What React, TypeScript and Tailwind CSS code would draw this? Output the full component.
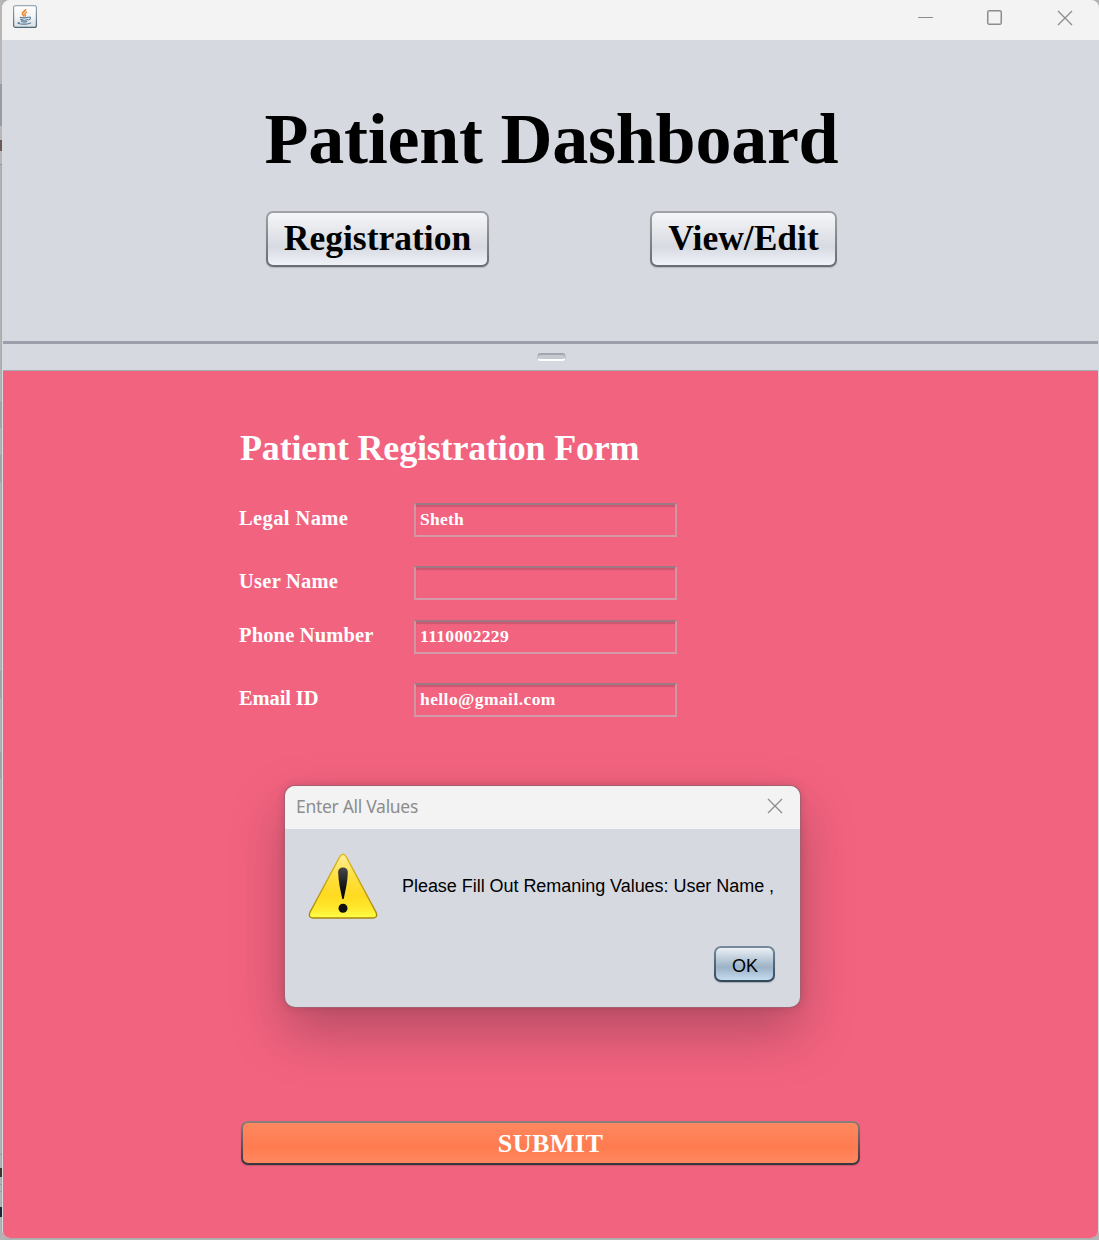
import React from "react";

const serif = "font-['Liberation_Serif','Times_New_Roman',serif] font-bold";

function JavaIcon() {
  return (
    <svg width="24" height="24" viewBox="0 0 24 24" fill="none">
      <defs>
        <linearGradient id="javaBg" x1="0" y1="0" x2="0" y2="1">
          <stop offset="0" stopColor="#fff" />
          <stop offset="0.5" stopColor="#f4f5f6" />
          <stop offset="1" stopColor="#d8dde0" />
        </linearGradient>
        <linearGradient id="javaEdge" x1="0" y1="0" x2="0" y2="1">
          <stop offset="0" stopColor="#9aa9b5" />
          <stop offset="1" stopColor="#4d6878" />
        </linearGradient>
      </defs>
      <rect x="0.6" y="0.6" width="22.8" height="21.8" rx="2" fill="url(#javaBg)" stroke="url(#javaEdge)" strokeWidth="1.2" />
      <path d="M12.600 4c.8 2-3.800 3-3.200 4.800.3 1 1.400 1.600 1.800 2.700" stroke="#f0872a" strokeWidth="1.700" />
      <path d="M14.200 7c-2.400 1-3 1.800-1.900 3 .4.500.2 1.200-.2 1.700" stroke="#f0872a" strokeWidth="1.300" />
      <path d="M6.800 12.300c1.500.7 6.800.7 8.800 0M7.300 14.400c2 .9 6 .8 7.800.1M8 16.300c1.700.8 4.700.7 6.200.1" stroke="#587b98" strokeWidth="1.200" />
      <path d="M15.500 12.300c2.800-.9 2.700 2-.2 2.800" stroke="#587b98" strokeWidth="1.100" />
      <path d="M6.600 17.300c-4.300.8.500 2 5 1.800 3.800-.1 6.500-.9 5.900-1.600" stroke="#587b98" strokeWidth="1.100" />
    </svg>
  );
}

function CloseIcon() {
  return (
    <svg width="16" height="16" viewBox="0 0 16 16" fill="none">
      <path d="M1 1l14 14M15 1L1 15" stroke="#8c8c8c" strokeWidth="1.300" />
    </svg>
  );
}

function WarningIcon() {
  return (
    <svg width="72" height="70" viewBox="0 0 72 70">
      <defs>
        <linearGradient id="warnFill" x1="0" y1="0" x2="0" y2="1">
          <stop offset="0" stopColor="#ffee98" />
          <stop offset="0.350" stopColor="#ffe040" />
          <stop offset="0.650" stopColor="#ffda20" />
          <stop offset="0.850" stopColor="#ffe92e" />
          <stop offset="1" stopColor="#ffff48" />
        </linearGradient>
        <linearGradient id="warnEdge" x1="0" y1="0" x2="0" y2="1">
          <stop offset="0" stopColor="#deba20" />
          <stop offset="1" stopColor="#a5860c" />
        </linearGradient>
        <linearGradient id="warnMark" x1="0" y1="0" x2="0" y2="1">
          <stop offset="0" stopColor="#484848" />
          <stop offset="0.600" stopColor="#161616" />
          <stop offset="1" stopColor="#000" />
        </linearGradient>
      </defs>
      <path
        d="M32.800 4.700Q36 -0.100 39.200 4.700L69 60.200Q71.200 66 66 66H6Q.8 66 3 60.200Z"
        fill="url(#warnFill)"
        stroke="url(#warnEdge)"
        strokeWidth="1.400"
      />
      <path d="M36 15.500c3.500 0 5 2.200 4.800 5.700-.3 9-2.300 17-4 25.300q-.8 1.500-1.600 0c-1.700-8.300-3.700-16.300-4-25.300-.2-3.500 1.300-5.700 4.800-5.700Z" fill="url(#warnMark)" />
      <circle cx="36" cy="56.200" r="4.500" fill="#111" />
    </svg>
  );
}

function NavButton({ label, size }: { label: string; size: string }) {
  return (
    <button className={`${size} h-[56px] rounded-[7px] bg-linear-to-b from-[#a0a2a8] to-[#6a6c72] p-[2px] shadow-[0_1px_1px_#b4b6bb]`}>
      <span className={`${serif} flex h-full items-center justify-center rounded-[5px] bg-linear-to-b from-[#f5f6f8] via-[#d7dae1] via-65% to-[#f0f2f8] pb-px pl-px text-[35.500px] leading-none text-black`}>
        {label}
      </span>
    </button>
  );
}

function Field({ label, value, gap, labelTrack = "", valueTrack = "" }: { label: string; value: string; gap: string; labelTrack?: string; valueTrack?: string }) {
  return (
    <div className={`flex h-[34px] ${gap}`}>
      <label className={`${serif} ${labelTrack} w-[175px] text-[20.500px] leading-[31px] text-white`}>{label}</label>
      <div className={`${serif} ${valueTrack} w-[263px] border-2 border-t-[#a07784] border-x-[#d295a4] border-b-[#d39aa9] pl-[4px] text-[17.500px] leading-[29px] text-white shadow-[inset_0_2px_1px_#cb5770]`}>
        {value}
      </div>
    </div>
  );
}

export default function App() {
  return (
    <div className="relative flex h-[1240px] w-[1099px] overflow-hidden bg-[#b3b3b3]">
      <div className="relative z-10 flex h-[1230px] w-[2px] shrink-0 flex-col overflow-hidden">
        <div className="h-[85px] border-b border-[#999] bg-[#b8b6b6]" />
        <div className="h-[41px] bg-[#989aa5]" />
        <div className="h-[39px] border-b border-[#999] bg-[#b8b6b6] pt-[14px]">
          <div className="h-[11px] bg-[#6b5a54]" />
        </div>
        <div className="mt-[236px] h-[27px] bg-[#a4a4a4]" />
        <div className="mt-[27px] h-[27px] bg-[#a4a4a4]" />
        <div className="mt-[189px] h-[27px] bg-[#a4a4a4]" />
        <div className="mt-[54px] h-[27px] bg-[#a4a4a4]" />
        <div className="mt-[375px] h-[14px] border-t border-[#999]" />
        <div className="h-[9px] bg-[#44352b]" />
        <div className="mt-[7px] h-[8px] border-y border-[#999]" />
        <div className="mt-[15px] h-[10px] bg-[#242430]" />
      </div>

      <div className="flex h-[1238px] flex-1 flex-col overflow-hidden rounded-lg bg-[#d6d9e0] shadow-[0_0_0_1px_#aaa]">
        <header className="flex h-[40px] shrink-0 items-center justify-between bg-[#f3f3f3] pr-[26px] pl-[11px]">
          <div className="-mt-[7px]">
            <JavaIcon />
          </div>
          <div className="-mt-[5px] flex items-center">
            <div className="h-px w-[15px] bg-[#8c8c8c]" />
            <div className="ml-[54px] size-[15px] rounded-[2px] border border-[#8c8c8c] shadow-[inset_0_0_0_0.500px_#8c8c8c]" />
            <div className="ml-[55px]">
              <CloseIcon />
            </div>
          </div>
        </header>

        <section className="flex h-[301px] shrink-0 flex-col items-center">
          <h1 className={`${serif} mt-[63px] ml-[2px] h-[71px] whitespace-nowrap text-[72px] leading-[72px] tracking-[-0.250px] text-black`}>Patient Dashboard</h1>
          <div className="mt-[37px] ml-px flex w-[571px] justify-between">
            <NavButton label="Registration" size="w-[223px]" />
            <NavButton label="View/Edit" size="w-[187px]" />
          </div>
        </section>

        <div className="mx-px flex h-[30px] shrink-0 justify-center border-t-[3px] border-b border-t-[#9a9fa9] border-b-[#a5a9b3]">
          <div className="mt-[9px] ml-[2px] h-[8px] w-[29px] rounded-[4px] border border-t-2 border-b-2 border-t-[#a3a6ad] border-x-[#c0c3ca] border-b-white bg-[#c6c9d0]" />
        </div>

        <main className="mr-px ml-px flex flex-1 flex-col overflow-hidden rounded-b-[7px] bg-[#f2637f] pl-[236px]">
          <h2 className={`${serif} mt-[59px] ml-px h-[36px] text-[36px] leading-[36px] tracking-[-0.180px] whitespace-nowrap text-white`}>Patient Registration Form</h2>
          <Field label="Legal Name" value="Sheth" gap="mt-[37px]" labelTrack="tracking-[0.400px]" valueTrack="tracking-[0.250px]" />
          <Field label="User Name" value="" gap="mt-[29px]" labelTrack="tracking-[0.250px]" />
          <Field label="Phone Number" value="1110002229" gap="mt-[20px]" labelTrack="tracking-[0.150px]" valueTrack="tracking-[0.350px]" />
          <Field label="Email ID" value="hello@gmail.com" gap="mt-[29px]" labelTrack="tracking-[-0.120px]" valueTrack="tracking-[0.420px]" />
          <button className="mt-[404px] ml-[2px] h-[44px] w-[619px] rounded-[7px] bg-linear-to-b from-[#8c7e7c] to-[#38353c] p-[2px] shadow-[0_1px_1px_#c45670]">
            <span className={`${serif} flex h-full items-center justify-center rounded-[5px] bg-linear-to-b from-[#ff8860] via-[#ff7b50] via-60% to-[#ff8760] pt-[2px] text-[26px] leading-none tracking-[0.500px] text-white`}>
              SUBMIT
            </span>
          </button>
        </main>
      </div>

      <div className="absolute top-[786px] left-[285px] flex h-[221px] w-[515px] flex-col rounded-[10px] bg-[#d6d9e0] shadow-[0_0_0_1px_#a65f70,0_0_9px_#50283440,0_24px_52px_#40203058]">
        <div className="flex h-[43px] shrink-0 items-center justify-between rounded-t-[10px] bg-[#f3f3f3] pr-[17px] pl-[11px]">
          <span className="-mt-[2px] font-['Noto_Sans','Open_Sans',sans-serif] text-[17.500px] leading-none tracking-[-0.300px] text-[#8d8d8d]">Enter All Values</span>
          <div className="-mt-[3px]">
            <CloseIcon />
          </div>
        </div>
        <div className="flex pt-[23px] pl-[22px]">
          <WarningIcon />
          <p className="mt-[23px] ml-[23px] font-['Liberation_Sans',Arial,sans-serif] text-[18px] leading-[22px] tracking-[-0.040px] whitespace-nowrap text-black">Please Fill Out Remaning Values: User Name ,</p>
        </div>
        <button className="mt-[24px] mr-[25px] h-[36px] w-[61px] self-end rounded-[7px] bg-linear-to-b from-[#788b9e] to-[#31475a] p-[2px] shadow-[0_1px_1px_#a8adb5]">
          <span className="flex h-full items-center justify-center rounded-[5px] bg-linear-to-b from-[#eaf0f5] via-[#9cb2c6] via-60% to-[#c4dbef] pt-[3px] pl-px font-['Liberation_Sans',Arial,sans-serif] text-[18px] leading-none text-black">OK</span>
        </button>
      </div>
    </div>
  );
}
